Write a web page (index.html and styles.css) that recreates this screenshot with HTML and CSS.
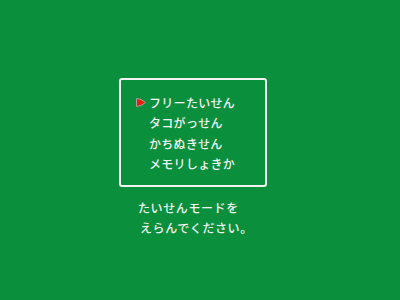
FILE: index.html
```html
<!DOCTYPE html>
<html lang="ja">
<head>
    <meta charset="UTF-8">
    <meta name="viewport" content="width=device-width, initial-scale=1.0">
    <title>たいせんモード</title>
    <link rel="stylesheet" href="styles.css">
</head>
<body>
    <div class="screen">
        <div class="menu-box">
            <div class="menu-item selected">
                <span class="cursor">
                    <svg width="10" height="9" viewBox="0 0 10 9">
                        <polygon points="0.5,0.5 5,1.5 9.5,4.5 5,7.5 0.5,8.5" fill="#e4200c" stroke="#a8a098" stroke-width="1"/>
                    </svg>
                </span>
                <span class="label">フリーたいせん</span>
            </div>
            <div class="menu-item">
                <span class="cursor"></span>
                <span class="label">タコがっせん</span>
            </div>
            <div class="menu-item">
                <span class="cursor"></span>
                <span class="label">かちぬきせん</span>
            </div>
            <div class="menu-item">
                <span class="cursor"></span>
                <span class="label">メモリしょきか</span>
            </div>
        </div>
        <div class="message">
            <div class="line">たいせんモードを</div>
            <div class="line second">えらんでください。</div>
        </div>
    </div>
</body>
</html>
```

FILE: styles.css
```css
body {
    margin: 0;
    background-color: #0a903c;
    font-family: 'Noto Sans CJK JP', 'Noto Sans', sans-serif;
    color: #f2f2f2;
}

.screen {
    width: 400px;
    height: 300px;
    padding-top: 78px;
    padding-left: 119px;
    box-sizing: border-box;
}

.menu-box {
    width: 148px;
    height: 109px;
    box-sizing: border-box;
    border: 2px solid #f2f2f2;
    border-radius: 3px;
    padding-top: 12px;
    padding-left: 15px;
}

.menu-item {
    display: flex;
    align-items: center;
    height: 20.5px;
    font-size: 12px;
    font-weight: 500;
    letter-spacing: 0.3px;
}

.cursor {
    display: flex;
    width: 13px;
    height: 9px;
}

.message {
    margin-top: 11px;
    margin-left: 19px;
    font-size: 12px;
    font-weight: 500;
    line-height: 20px;
    letter-spacing: 0.6px;
}

.message .second {
    padding-left: 2px;
}
```
